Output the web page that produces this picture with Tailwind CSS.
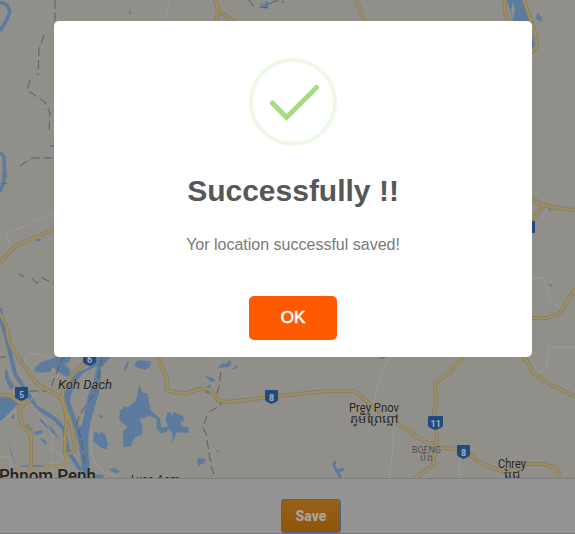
<!DOCTYPE html>
<html lang="en"><head><meta charset="utf-8"><title>Save location</title>
<script src="https://cdn.jsdelivr.net/npm/@tailwindcss/browser@4"></script></head>
<body class="relative h-[534px] w-[575px] overflow-hidden bg-[#949494] font-['Liberation_Sans',Arial,sans-serif]">
<main class="flex h-[534px] flex-col">
<svg class="block h-[478px] w-full shrink-0 bg-[#908f8a]" viewBox="0 0 575 478" fill="none" stroke-linejoin="round">
  <defs>
    <path id="shield" d="M0 1Q0 0 1 0H12Q13 0 13 1V10Q12 12 6.500 14Q1 12 0 10Z" fill="#224a80"/>
    <!-- Roads, drawn twice for casing and surface -->
    <g id="roads">
      <path d="M0 313L6 325Q8 331 8 336L10 344L22 363Q29 372 34 380Q40 388 52 392Q60 396 63 403Q67 410 66 428L65 438L65 455"/>
      <path d="M0 395L10 395.500L18 402L24 403.500M29 400.500L19 408Q21 420 23 427L31 434V471"/>
      <path d="M90 360L80 367Q70 375 63 391.500Q61 402 67 414Q72 423 73 437L75.500 446Q74 453 67 454.500"/>
      <path d="M157 355L164 372L167 380L166 390L173 392L186 393.500L200 389H209L213 393L218 400L224 402L238 401L270 397L327 391H350Q355 391 358 394L372 406L382 414"/>
      <path d="M396 423L409 430L415 436L435 447L458 449L467 452L479 462L490 467L503 471L516 470L525 464H544L556 468L561 478"/>
      <path d="M464 353L461 360L453 367L449 374L438 380L435 385L436 403L434 415L437 437L433 465L415 478M521 353L529 364L533 373Q550 386 575 396"/>
      <path d="M0 263L14 247L54 229M532 197L538 203L544 205L556 208L575 210M543 205L533 220M532 318H547L560 313L568 300L575 288"/>
      <path d="M215 0Q220 8 216 23M219 11L238 24M356 0L366 25M505 0Q503 15 511 24M524 0L534 30L537 43Q536 51 530 52"/>
    </g>
  </defs>
  <g fill="#5d7b9f">
    <g transform="translate(0 340) scale(.33333)">
      <path d="M102 93Q112 66 145 60L171 50H214L207 67L195 72L209 88Q214 106 200 111L175 96L160 80L150 95L123 98ZM270 50H332L303 84L299 150L279 218Q262 270 265 330L270 413H255L247 390L236 310Q220 250 202 202L192 170L206 128L234 96L270 80ZM15 90L24 92L26 113L43 139L31 150L15 112ZM0 172L35 173L58 188L0 247Z"/>
      <path d="M418 135L427 158L443 160L451 210L480 236L484 263L505 258L496 243L503 216L512 218L514 228L522 216L550 230L552 242L541 245L547 260L565 260L567 278L530 277L518 310L517 280L508 267L498 277L483 280L470 267L469 234L448 228L419 238L428 260L426 285L407 290L397 306L391 320L370 321L369 276L382 261L358 240L359 210L370 208L369 196L380 203L408 182ZM280 280L290 275L298 285L301 276L315 282L324 313L319 328L305 324L282 306ZM403 72L414 61L455 64L450 80L436 90L409 82ZM373 92Q374 70 387 64L383 82ZM327 387L343 384L364 396L345 399ZM296 227L306 225L309 231L300 235ZM285 402L310 406L310 413H270ZM590 370L600 352V380ZM30 236L44 220L42 236ZM99 276L126 271L129 278L111 286ZM120 292L138 303L140 315L130 308ZM121 236L157 266L182 300L153 275L120 242ZM18 247L26 300L45 376L34 345Z"/>
    </g>
    <path d="M219 366L223 363L225 364L230 360L231 363L229 367L219 368ZM205 376L213 378L216 381L211 382ZM207 386L211 384L209 392L212 394L205 393ZM197 464L198 458L206 459L203 464L199 465ZM216 450L219 451L218 453ZM377 357H387L382 359ZM261 3L264 5L266 1L270 3L267 8L261 6ZM507 0H522L528 16L532 36L536 45L532 50L528 24H514ZM537 12L542 18V22L536 19ZM36 239H41V241H36ZM549 285L552 284V286H549Z"/>
  </g>
  <path d="M513 2L515 10L513 20L511 10ZM97 366L83 373Q70 389 70 402L79 427L82 425L88 396L94 380Z" fill="#908f8a"/>
  <path d="M24 426L29 423L34 431L29 430Z" fill="#7b8c69"/>
  <g stroke="#5d7b9f">
    <path d="M0 2L7 5L10 11L7 19L0 31M0 152L4 157L5 178M4 170V180L0 192" stroke-width="3.500"/>
    <path d="M0 308L2 322L9 348L15 374L28 394L36 407L55 419L64 429L68 451L81 471" stroke-width="4"/>
    <path d="M335 461L334 465L336 470L339 474L340 478M338 471L344 469" stroke-width="3"/>
    <path d="M20 466H44" stroke-width="1.500"/>
  </g>
  <g stroke="#9b9b98" stroke-width="1">
    <path d="M26 366L25 360L28 355L38 354L51 358M0 422L31 400L39 387Q46 377 58 377M30 402Q47 420 52 436L53 478M43 458L52 448L64 458M45 462L70 470M49 467L67 457M0 457H11V468M91 432V445Q91 463 104 472L116 476"/>
    <path d="M11 247L6 234L54 213M388 359L376 390L374 407M394 424L393 450L389 478M460 452L459 478M439 460L449 451M536 374L546 368L549 347H575M532 279L543 277L551 302L560 307M169 0L165 22"/>
  </g>
  <path d="M44 35L39 49L38 75M30 80L27 90L45 102L50 113L49 132M20 166L32 158H54M50 146H54M55 0V21M19 274L24 277M32 278L36 283L41 281M41 277L54 284M29 391H50L55 376L64 355M102 357L98 384L92 397L86 405L79 416L77 424L81 438L85 467M0 357H6M221 372L219 386L217 393L221 405L208 413L203 427L206 434L211 465L215 478M233 369L237 366M249 0L254 7M259 7L268 8M270 4L274 1H280M283 1V3M4 184L7 183" stroke="#5e5e5a" stroke-dasharray="9 4"/>
  <path d="M129 11L131 14M549 209L551 211" stroke="#5e5e5a"/>
  <use href="#roads" stroke="#837b66" stroke-width="4"/>
  <use href="#roads" stroke="#9d8e62" stroke-width="2.700"/>
  <path d="M15 471L31 470L43 468L50 466L65 465V455" stroke="#9d8e62" stroke-width="2.700"/>
  <use href="#shield" x="15" y="387"/><use href="#shield" x="83" y="352"/><use href="#shield" x="265" y="390"/>
  <use href="#shield" transform="translate(428 416) scale(1.150 1)"/><use href="#shield" x="457" y="445"/>
  <path d="M528 221H535V233H528Z" fill="#224a80"/>
  <g class="font-[Roboto,'Liberation_Sans',sans-serif]" fill="#aaafb3" font-size="9" font-weight="700" text-anchor="middle">
    <text x="21.500" y="397.500">5</text><text x="89.500" y="362.500">6</text><text x="271.500" y="400.500">8</text><text x="435.700" y="426.500">11</text><text x="463.500" y="455.500">8</text>
  </g>
  <g class="font-[Roboto,'Noto_Sans',sans-serif]" fill="#24231d" stroke="#989791" stroke-width="1" paint-order="stroke">
    <text x="58" y="388.500" font-size="13" font-style="italic" textLength="54" lengthAdjust="spacingAndGlyphs">Koh Dach</text>
    <text x="-1" y="482" font-size="17.500" font-weight="500" textLength="97" lengthAdjust="spacingAndGlyphs">Phnom Penh</text>
    <text x="131" y="484" font-size="12.500" textLength="49" lengthAdjust="spacingAndGlyphs">Lvea Aem</text>
    <text x="349" y="412" font-size="12" textLength="50" lengthAdjust="spacingAndGlyphs">Prey Pnov</text>
    <text x="350" y="423" font-size="11" textLength="48" lengthAdjust="spacingAndGlyphs">ភូមិព្រៃព្នៅ</text>
    <text x="498" y="468" font-size="12" textLength="28" lengthAdjust="spacingAndGlyphs">Chrey</text>
    <text x="504" y="478" font-size="10" textLength="16" lengthAdjust="spacingAndGlyphs">ជ្រៃ</text>
    <g fill="#4c4b45"><text x="412" y="452.500" font-size="9.500" textLength="29" lengthAdjust="spacingAndGlyphs">BOENG</text>
    <text x="420" y="461" font-size="9" textLength="13" lengthAdjust="spacingAndGlyphs">បឹង</text></g>
  </g>
</svg>
<footer class="flex h-14 justify-center border-y border-t-[#7d7d7d] border-b-[#757575] bg-[#949494] pt-5 pl-[47px]">
  <button class="h-[34px] w-[60px] rounded-[3px] border-[1.5px] border-[#49658d] bg-linear-to-b from-[#966019] to-[#905508] font-[Roboto,sans-serif] text-[14px] leading-[32px] font-black text-[#a9a49d]">Save</button>
</footer>
</main>
<section role="dialog" class="absolute top-[21px] left-[54px] flex h-[336px] w-[478px] flex-col items-center rounded-[5px] bg-white pt-[37px]">
  <svg class="h-[88px] w-[88px] shrink-0" viewBox="0 0 88 88" fill="none"><circle cx="44" cy="44" r="42" stroke="#edf8e7" stroke-width="4"/><path d="M23.500 45L37.500 59.500L67.500 29.500" stroke="#a5dc86" stroke-width="5" stroke-linecap="round"/></svg>
  <h1 class="mt-[25px] text-[30px] leading-10 font-bold whitespace-nowrap text-[#575757]">Successfully !!</h1>
  <p class="mt-[24px] text-[16px] leading-[20px] whitespace-nowrap text-[#797979]">Yor location successful saved!</p>
  <button class="mt-[41px] h-11 w-[88px] rounded-[5px] bg-[#ff5a00] text-[17px] leading-[44px] font-medium text-white [-webkit-text-stroke:0.6px_white]">OK</button>
</section>
</body></html>
